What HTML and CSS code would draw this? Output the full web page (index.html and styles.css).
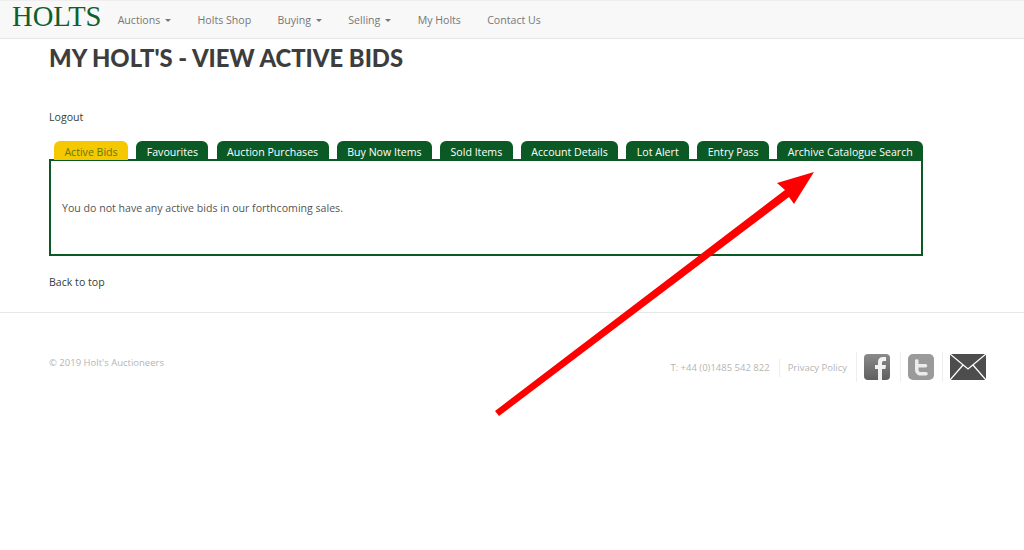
FILE: index.html
```html
<!DOCTYPE html>
<html lang="en">
<head>
<meta charset="utf-8">
<title>My Holt's - View Active Bids</title>
<link rel="stylesheet" href="styles.css">
</head>
<body>
<nav class="navbar">
  <a class="brand" href="#">HOLTS</a>
  <ul class="nav">
    <li><a href="#">Auctions<span class="caret"></span></a></li>
    <li><a href="#">Holts Shop</a></li>
    <li><a href="#">Buying<span class="caret"></span></a></li>
    <li><a href="#">Selling<span class="caret"></span></a></li>
    <li><a href="#">My Holts</a></li>
    <li><a href="#">Contact Us</a></li>
  </ul>
</nav>
<main class="content">
  <h1 class="title">MY HOLT'S - VIEW ACTIVE BIDS</h1>
  <p class="logout"><a href="#">Logout</a></p>
  <ul class="tabs">
    <li class="tab active">Active Bids</li>
    <li class="tab">Favourites</li>
    <li class="tab">Auction Purchases</li>
    <li class="tab">Buy Now Items</li>
    <li class="tab">Sold Items</li>
    <li class="tab">Account Details</li>
    <li class="tab">Lot Alert</li>
    <li class="tab">Entry Pass</li>
    <li class="tab">Archive Catalogue Search</li>
  </ul>
  <section class="panel">You do not have any active bids in our forthcoming sales.</section>
  <p class="back"><a href="#">Back to top</a></p>
</main>
<footer class="footer">
  <div class="copy">© 2019 Holt's Auctioneers</div>
  <div class="contact">
    <span class="phone">T: +44 (0)1485 542 822</span>
    <span class="policy">Privacy Policy</span>
    <span class="social fb">
      <svg width="26" height="26" viewBox="0 0 26 26"><defs><linearGradient id="g" x1="0" y1="0" x2="0" y2="1"><stop offset="0" stop-color="#8a8a8a"/><stop offset="1" stop-color="#5f5f5f"/></linearGradient></defs><rect width="26" height="26" rx="4" fill="url(#g)"/><path d="M14 26V15h-3v-4h3V8c0-3.400 2-5 5-5h3v4h-2c-1.300 0-2 .6-2 2v2h4l-.6 4H18v11z" fill="#f2f2f2"/></svg>
    </span>
    <span class="social">
      <svg width="26" height="26" viewBox="0 0 26 26"><rect width="26" height="26" rx="5" fill="#9a9a9a"/><path d="M7 6.500c0-1.800 3.500-1.800 3.500 0V10h7c2.300 0 2.300 3.500 0 3.500h-7V16c0 1.500 1 2 2.500 2h5c2.300 0 2.300 3.500 0 3.500h-6C9.500 21.500 7 19 7 15.500z" fill="#ececec"/></svg>
    </span>
    <span class="social mail">
      <svg width="36" height="26" viewBox="0 0 36 26"><rect width="36" height="26" fill="#4d4d4d"/><path d="M0 0L18 15L36 0M0 26L13 11M36 26L23 11" fill="none" stroke="#fff" stroke-width="1.300"/></svg>
    </span>
  </div>
</footer>
<svg class="arrow" width="1024" height="550" viewBox="0 0 1024 550" aria-hidden="true">
  <polygon points="495,411 785,190 777,183 814,172 794,204 789,197 499,416" fill="#fe0000"/>
</svg>
</body>
</html>
```
FILE: styles.css
```css
* { box-sizing: border-box; }
html, body { margin: 0; padding: 0; }
body {
  position: relative;
  height: 550px;
  overflow: hidden;
  background: #fff;
  font-family: "Open Sans", "Liberation Sans", sans-serif;
  font-size: 10.6px;
  color: #555;
}
a { color: inherit; text-decoration: none; }
ul { list-style: none; margin: 0; padding: 0; }

.navbar {
  display: flex;
  align-items: center;
  height: 39px;
  padding-left: 12px;
  background: #f8f8f8;
  border-top: 1px solid #eee;
  border-bottom: 1px solid #e7e7e7;
}
.brand {
  font-family: "Liberation Serif", serif;
  font-size: 28.6px;
  line-height: 30px;
  color: #0f5f2c;
  width: 92.5px;
  margin-top: -6px;
  white-space: nowrap;
}
.nav { display: flex; }
.nav li a {
  display: block;
  padding: 0 13.15px;
  color: #777;
  font-size: 10.6px;
  line-height: 38px;
  white-space: nowrap;
}
.caret {
  display: inline-block;
  margin-left: 5px;
  vertical-align: middle;
  border-top: 3px solid #777;
  border-left: 3px solid transparent;
  border-right: 3px solid transparent;
}

.content { padding-left: 49px; width: 923px; }
.title {
  margin: 0;
  padding-top: 4px;
  font-family: "Lato", "Liberation Sans", sans-serif;
  font-weight: 900;
  font-size: 23.8px;
  line-height: 30px;
  color: #3d3d3d;
  white-space: nowrap;
}
.logout { margin: 35px 0 0; line-height: 18px; color: #33423a; }
.tabs { display: flex; gap: 8.3px; margin-top: 15px; padding-left: 5px; }
.tab {
  height: 19px;
  padding: 0 10.4px;
  line-height: 22px;
  color: #fff;
  background: #0b5a26;
  border-radius: 6px 6px 0 0;
  white-space: nowrap;
}
.tab.active { background: #f6c800; color: #5f7a10; }
.panel {
  height: 97px;
  margin-top: -1px;
  padding: 38px 11px 0;
  line-height: 18px;
  border: 2px solid #0b5a26;
  background: #fff;
}
.back { margin: 17px 0 0; line-height: 18px; color: #33423a; }

.footer {
  display: flex;
  justify-content: space-between;
  margin-top: 21px;
  padding: 41px 38px 0 49px;
  border-top: 1px solid #e7e7e7;
  color: #b5b5b5;
  font-size: 9.5px;
}
.copy { line-height: 18px; }
.contact { display: flex; align-items: flex-start; padding-top: 2px; }
.phone { line-height: 18px; margin-top: 3px; padding-right: 9px; border-right: 1px solid #eee; }
.policy { line-height: 18px; margin-top: 3px; padding: 0 9px 0 8px; }
.social {
  display: block;
  height: 30px;
  margin-top: -4px;
  padding: 2px 8px 0 7px;
  border-left: 1px solid #eee;
}
.social.fb { padding-right: 10px; }
.social.mail { padding-right: 0; }

.arrow { position: absolute; left: 0; top: 0; pointer-events: none; }
```
